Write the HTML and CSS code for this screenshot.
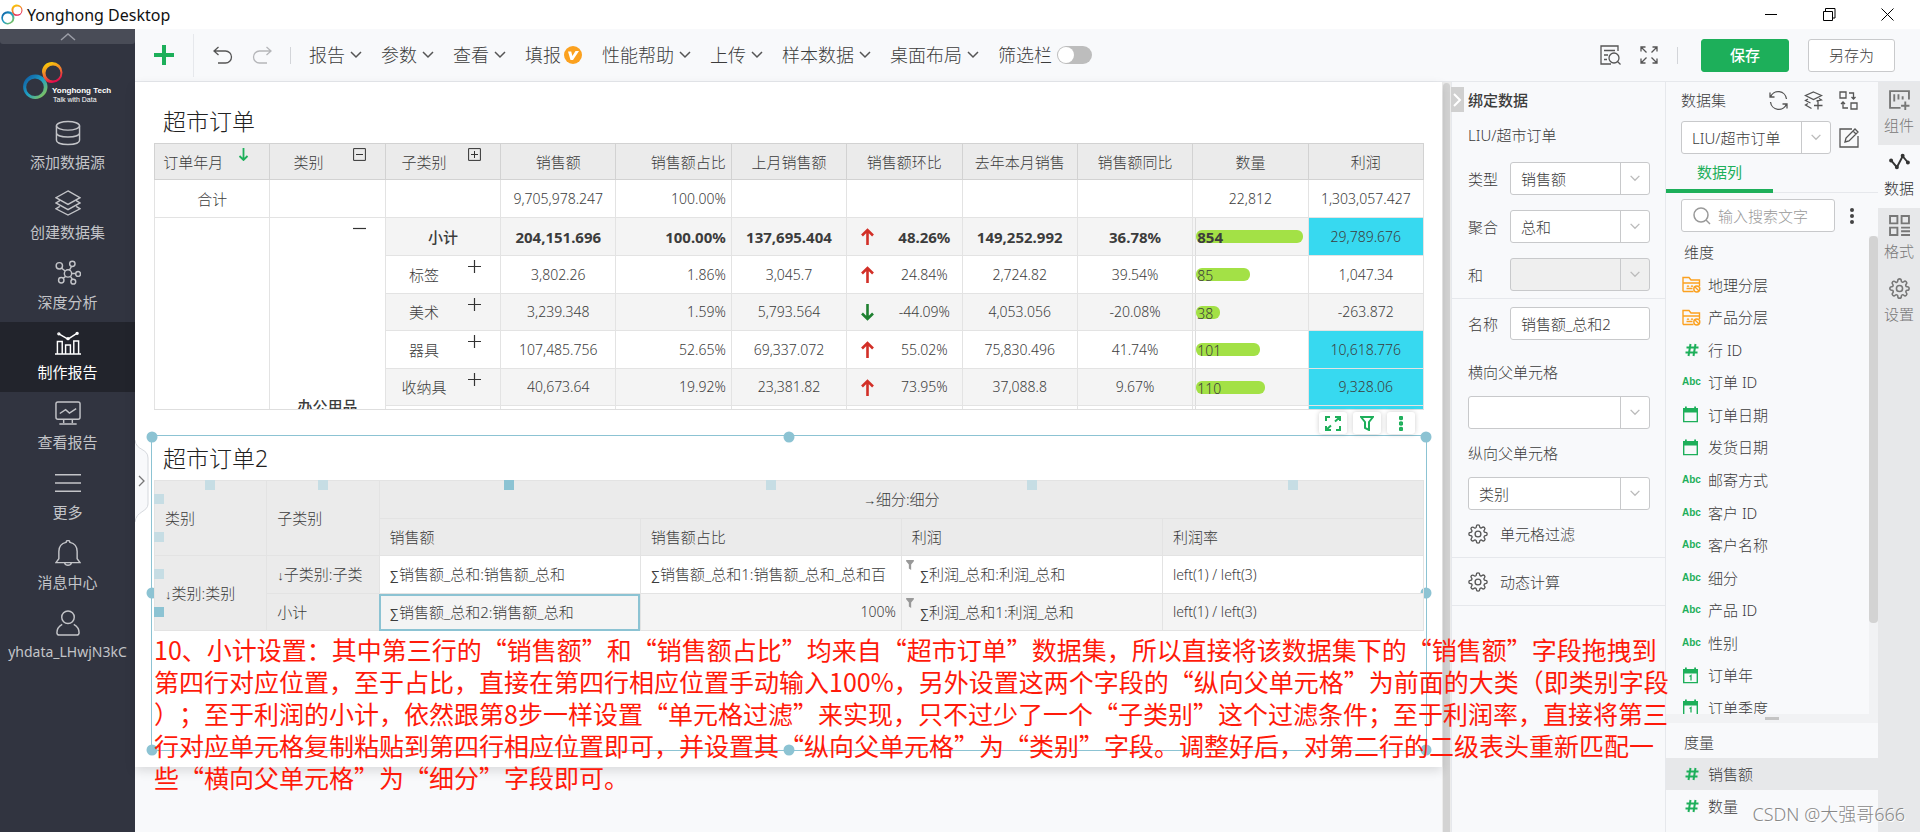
FILE: index.html
```html
<!DOCTYPE html>
<html lang="zh-CN">
<head>
<meta charset="utf-8">
<title>Yonghong Desktop</title>
<link rel="stylesheet" href="styles.css">
</head>
<body>
<svg class="defs" aria-hidden="true">
  <defs>
    <linearGradient id="g-cool" x1="0" y1="0" x2="1" y2="1"><stop offset="0" stop-color="#0b4f9f"/><stop offset=".5" stop-color="#1fa0c4"/><stop offset="1" stop-color="#a4cf3a"/></linearGradient>
    <linearGradient id="g-warm" x1="0.2" y1="0" x2=".6" y2="1"><stop offset="0" stop-color="#fbd500"/><stop offset=".45" stop-color="#f2882a"/><stop offset="1" stop-color="#e3004f"/></linearGradient>
    <symbol id="rings" viewBox="0 0 40 39">
      <path fill="url(#g-warm)" fill-rule="evenodd" d="M29 1a10.500 10.500 0 0 1 0 21c-4 0-7-2-8.500-5l-1.500-6C19 5 23.500 1 29 1zM30 4.500a7.500 7.500 0 1 0 0 15 7.500 7.500 0 0 0 0-15z"/>
      <path fill="url(#g-cool)" fill-rule="evenodd" d="M12.500 13.500c4 0 7 1.500 9 4.500 2 2.500 3 5 3 8a12.200 12.200 0 1 1-12-12.500zM12 17.500a8.800 8.800 0 1 0 0 17.600 8.800 8.800 0 0 0 0-17.600z"/>
    </symbol>
    <symbol id="chev" viewBox="0 0 12 8"><path d="M1 1l5 5 5-5"/></symbol>
    <symbol id="gear" viewBox="0 0 24 24"><circle cx="12" cy="12" r="3.500"/><path d="M19.400 15a1.650 1.650 0 0 0 .33 1.820l.06.06a2 2 0 0 1-2.830 2.830l-.06-.06a1.650 1.650 0 0 0-2.820 1.180V21a2 2 0 0 1-4 0v-.09A1.650 1.650 0 0 0 7.180 19.730l-.06.06a2 2 0 0 1-2.830-2.830l.06-.06A1.650 1.650 0 0 0 3.170 14H3a2 2 0 0 1 0-4h.09A1.650 1.650 0 0 0 4.270 7.180l-.06-.06a2 2 0 0 1 2.830-2.830l.06.06A1.650 1.650 0 0 0 10 3.090V3a2 2 0 0 1 4 0v.09a1.650 1.650 0 0 0 2.820 1.180l.06-.06a2 2 0 0 1 2.830 2.830l-.06.06A1.650 1.650 0 0 0 20.910 10H21a2 2 0 0 1 0 4h-.09a1.650 1.650 0 0 0-1.510 1z"/></symbol>
    <symbol id="up" viewBox="0 0 13 17"><path d="M6.500 17V2M1 7.500L6.500 2 12 7.500" fill="none" stroke="currentColor" stroke-width="2.600"/></symbol>
    <symbol id="plus" viewBox="0 0 13 13"><path d="M6.500 0v13M0 6.500h13" stroke="#333" stroke-width="1.200"/></symbol>
    <symbol id="hash" viewBox="0 0 14 14"><path d="M5.500 1L3.500 13M10.500 1l-2 12M1.500 4.500h12M.5 9.500h12" fill="none" stroke="#1daf5a" stroke-width="2"/></symbol>
    <symbol id="folder" viewBox="0 0 19 17"><path d="M1 15.500V1.500h6l2 2.500h8.500v6M1 15.500h10.500M1 7h16.500M5 9.800q1 .9 2 0M9 9.800q1 .9 2 0M4.500 12.500h6" fill="none" stroke="#fba11f" stroke-width="1.400"/><circle cx="14.800" cy="13" r="3" fill="none" stroke="#fba11f" stroke-width="1.400"/><path d="M13 11l4 4" stroke="#fba11f" stroke-width="1.300"/></symbol>
    <symbol id="cal" viewBox="0 0 17 17"><path d="M1.700 3v12.600h13.600V3" fill="none" stroke="#1daf5a" stroke-width="1.400"/><path d="M1 2h2V.5h1.800V2h7.400V.5H14V2h2v4.500H1z" fill="#1daf5a"/></symbol>
    <symbol id="funnel" viewBox="0 0 10 13"><path d="M0 0h10v1.500L6.500 6v7L3.500 11V6L0 1.500z" fill="#999"/></symbol>
  </defs>
</svg>

<div class="app">
  <header class="titlebar">
    <svg class="app-logo"><use href="#rings"/></svg>
    <span class="app-name">Yonghong Desktop</span>
    <button class="win-btn" aria-label="最小化"><svg width="12" height="13"><path d="M0 6.500h12" stroke="#000"/></svg></button>
    <button class="win-btn" aria-label="还原"><svg width="13" height="13"><path d="M.5 3.500h9v9h-9zM2.500 3V.5h9.500v9.500h-2" fill="none" stroke="#000"/></svg></button>
    <button class="win-btn" aria-label="关闭"><svg width="13" height="13"><path d="M.5.5l12 12M12.500.5l-12 12" stroke="#000"/></svg></button>
  </header>

  <div class="body">
    <nav class="sidebar">
      <button class="side-up" aria-label="收起"><svg width="16" height="9"><path d="M1 8l7-6 7 6" fill="none" stroke="#9b9da6" stroke-width="1.500"/></svg></button>
      <svg class="brand" viewBox="0 0 135 68">
        <use href="#rings" x="23" y="17" width="40" height="39"/>
        <text x="52" y="49" class="brand-name">Yonghong Tech</text>
        <text x="53" y="58" class="brand-sub">Talk with Data</text>
      </svg>
      <a class="side-item" href="#"><svg viewBox="0 0 27 27"><ellipse cx="13.500" cy="6" rx="12" ry="4.500"/><path d="M1.500 6v15c0 6 24 6 24 0V6M1.500 13.500c0 5.500 24 5.500 24 0"/></svg>添加数据源</a>
      <a class="side-item" href="#"><svg viewBox="0 0 27 27"><path d="M13.500 1L26 8l-12.500 7L1 8zM5 11l-4 2.500 12.500 7 12.500-7-4-2.500M5 17l-4 2.500 12.500 6.500L26 19.500 22 17"/></svg>创建数据集</a>
      <a class="side-item" href="#"><svg viewBox="0 0 27 27"><circle cx="13.500" cy="14" r="3.800"/><circle cx="4.500" cy="6" r="3.300"/><circle cx="18" cy="4" r="2.800"/><circle cx="24" cy="14.500" r="2.500"/><circle cx="19" cy="22.500" r="2.500"/><circle cx="6.500" cy="21" r="2.800"/><path d="M7 8.500l3.500 3M17 7l-2 3.500M17.500 14H21M16 17l2 3M11 17l-2.500 2"/></svg>深度分析</a>
      <a class="side-item active" href="#"><svg viewBox="0 0 27 27"><path d="M0 25h27M2.500 25V12h5v13M11 25v-9.500h5V25M19.500 25V11.500h5V25M4 4l9.500 5.500L23.500 3"/><circle cx="4" cy="4" r="1"/><circle cx="13.500" cy="9" r="1"/><circle cx="23" cy="3.500" r="1"/></svg>制作报告</a>
      <a class="side-item" href="#"><svg viewBox="0 0 27 27"><rect x="1" y="2" width="25" height="18" rx="2"/><path d="M5 14l6-4 4 3.500L22 9M9 20v4M18 20v4M4.500 25h18"/></svg>查看报告</a>
      <a class="side-item" href="#"><svg viewBox="0 0 27 27"><path d="M0 5h27M0 13.500h27M0 22h27"/></svg>更多</a>
      <a class="side-item" href="#"><svg viewBox="0 0 27 27"><path d="M1 23.500h25l-3-4V12c0-5-3-8.500-7.500-9.500a2 2 0 0 0-4 0C7 3.500 4 7 4 12v7.500zM10 24c1 3 6 3 7 0"/></svg>消息中心</a>
      <a class="side-item" href="#"><svg viewBox="0 0 27 27"><circle cx="13.500" cy="7.500" r="6.500"/><path d="M7.500 15C4 17 2 20 2 23.500c0 1.500 1 2.500 2.500 2.500h18c1.500 0 2.500-1 2.500-2.500 0-3.500-2-6.500-5.500-8.500"/></svg>yhdata_LHwjN3kC</a>
    </nav>

    <div class="work">
      <div class="toolbar">
        <button class="add" aria-label="新建"><svg width="20" height="20"><path d="M10 0v20M0 10h20" stroke="#1daf5a" stroke-width="4"/></svg></button>
        <i class="sep tall"></i>
        <button class="ico undo" aria-label="撤销"><svg width="20" height="18" viewBox="0 0 20 18"><path d="M5.500 1L1 5l4.500 4M1 5h11.500a6 6 0 0 1 0 12H5"/></svg></button>
        <button class="ico redo" aria-label="重做"><svg width="20" height="18" viewBox="0 0 20 18"><path d="M14.500 1L19 5l-4.500 4M19 5H7.500a6 6 0 0 0 0 12H15"/></svg></button>
        <i class="sep"></i>
        <div class="menus">
          <button>报告<svg class="chev"><use href="#chev"/></svg></button>
          <button>参数<svg class="chev"><use href="#chev"/></svg></button>
          <button>查看<svg class="chev"><use href="#chev"/></svg></button>
          <button class="vip">填报<svg width="18" height="18"><circle cx="9" cy="9" r="9" fill="#fba11f"/><path d="M4 5.500h3.200l1.200 4.500L11.500 5h3.500L9 14H6.500z" fill="#fff"/></svg></button>
          <button>性能帮助<svg class="chev"><use href="#chev"/></svg></button>
          <button>上传<svg class="chev"><use href="#chev"/></svg></button>
          <button>样本数据<svg class="chev"><use href="#chev"/></svg></button>
          <button>桌面布局<svg class="chev"><use href="#chev"/></svg></button>
          <label class="switch">筛选栏<input type="checkbox"></label>
        </div>
        <button class="ico preview" aria-label="预览"><svg width="21" height="20" viewBox="0 0 21 20"><path d="M18 6V1H1v18h10M4 5.500h11M4 10h4M4 14.500h3"/><circle cx="14" cy="13" r="5"/><path d="M17.500 16.500l3 3"/></svg></button>
        <button class="ico full" aria-label="全屏"><svg width="18" height="18" viewBox="0 0 18 18"><path d="M1 5.500V1h4.500M1 1l5.500 5.500M12.500 1H17v4.500M17 1l-5.500 5.500M1 12.500V17h4.500M1 17l5.500-5.500M12.500 17H17v-4.500M17 17l-5.500-5.500"/></svg></button>
        <i class="sep"></i>
        <button class="btn primary">保存</button>
        <button class="btn">另存为</button>
      </div>

      <div class="panes">
        <main class="stage">
          <div class="canvas">
            <section class="widget">
              <h2>超市订单</h2>
              <div class="clip">
                <table class="report">
                  <thead>
                    <tr>
                      <th class="mk">订单年月<svg class="corner" viewBox="0 0 13 13"><path d="M6.500 0v12M2.500 8l4 4 4-4" fill="none" stroke="#1daf5a" stroke-width="1.800"/></svg></th>
                      <th class="mk">类别<svg class="corner" viewBox="0 0 13 13"><path d="M.6.6h11.800v11.800H.6zM3 6.500h7" fill="none" stroke="#333"/></svg></th>
                      <th class="mk">子类别<svg class="corner" viewBox="0 0 13 13"><path d="M.6.6h11.800v11.800H.6zM3 6.500h7M6.500 3v7" fill="none" stroke="#333"/></svg></th>
                      <th>销售额</th><th class="r">销售额占比</th><th>上月销售额</th><th>销售额环比</th><th>去年本月销售</th><th>销售额同比</th><th>数量</th><th>利润</th>
                    </tr>
                  </thead>
                  <tbody>
                    <tr><td class="zh">合计</td><td></td><td></td><td>9,705,978.247</td><td class="r">100.00%</td><td></td><td></td><td></td><td></td><td>22,812</td><td>1,303,057.427</td></tr>
                    <tr class="alt sum"><td class="plain" rowspan="6"></td><td class="plain zh mk2" rowspan="6">办公用品<svg class="corner" viewBox="0 0 13 13"><path d="M0 6.500h13" stroke="#333" stroke-width="1.200"/></svg></td><td class="zh">小计</td><td>204,151.696</td><td class="r">100.00%</td><td>137,695.404</td><td><div class="trend"><svg><use href="#up"/></svg><span>48.26%</span></div></td><td>149,252.992</td><td>36.78%</td><td class="q"><div class="bar" style="width:96%">854</div></td><td class="hot">29,789.676</td></tr>
                    <tr><td class="zh mk">标签<svg class="corner"><use href="#plus"/></svg></td><td>3,802.26</td><td class="r">1.86%</td><td>3,045.7</td><td><div class="trend"><svg><use href="#up"/></svg><span>24.84%</span></div></td><td>2,724.82</td><td>39.54%</td><td class="q"><div class="bar" style="width:48%">85</div></td><td>1,047.34</td></tr>
                    <tr class="alt short"><td class="zh mk">美术<svg class="corner"><use href="#plus"/></svg></td><td>3,239.348</td><td class="r">1.59%</td><td>5,793.564</td><td><div class="trend down"><svg><use href="#up"/></svg><span>-44.09%</span></div></td><td>4,053.056</td><td>-20.08%</td><td class="q"><div class="bar" style="width:21%">38</div></td><td>-263.872</td></tr>
                    <tr><td class="zh mk">器具<svg class="corner"><use href="#plus"/></svg></td><td>107,485.756</td><td class="r">52.65%</td><td>69,337.072</td><td><div class="trend"><svg><use href="#up"/></svg><span>55.02%</span></div></td><td>75,830.496</td><td>41.74%</td><td class="q"><div class="bar" style="width:57%">101</div></td><td class="hot">10,618.776</td></tr>
                    <tr class="alt short"><td class="zh mk">收纳具<svg class="corner"><use href="#plus"/></svg></td><td>40,673.64</td><td class="r">19.92%</td><td>23,381.82</td><td><div class="trend"><svg><use href="#up"/></svg><span>73.95%</span></div></td><td>37,088.8</td><td>9.67%</td><td class="q"><div class="bar" style="width:62%">110</div></td><td class="hot">9,328.06</td></tr>
                    <tr class="rest"><td></td><td></td><td></td><td></td><td></td><td></td><td></td><td class="q"></td><td class="hot"></td></tr>
                  </tbody>
                </table>
              </div>
            </section>

            <section class="widget selected">
              <div class="floatbar">
                <button aria-label="放大"><svg width="16" height="15" viewBox="0 0 16 15"><path d="M1 5V1h4M10 1h5v4M15 1l-5 4.500M1 10v4h5M1 14l5-4.500M15 10v4h-4"/></svg></button>
                <button aria-label="筛选"><svg width="14" height="15" viewBox="0 0 14 15"><path d="M1 1h12L9 6v8l-4-2V6z"/></svg></button>
                <button aria-label="更多"><svg width="4" height="15" viewBox="0 0 4 15"><circle cx="2" cy="2" r="1.200"/><circle cx="2" cy="7.500" r="1.200"/><circle cx="2" cy="13" r="1.200"/></svg></button>
              </div>
              <i class="h tl"></i><i class="h tc"></i><i class="h tr"></i><i class="h ml"></i><i class="h mr"></i><i class="h bl"></i><i class="h bc"></i><i class="h br"></i>
              <h2>超市订单2</h2>
              <div class="design">
                <table class="edit">
                  <colgroup><col class="e1"><col class="e1"><col class="e2"><col class="e2"><col class="e2"><col class="e2"></colgroup>
                  <tr class="e-a"><th rowspan="2">类别</th><th rowspan="2">子类别</th><th colspan="4" class="mid"><span class="sym">→</span>细分:细分</th></tr>
                  <tr class="e-b"><th>销售额</th><th>销售额占比</th><th>利润</th><th>利润率</th></tr>
                  <tr class="e-a"><th rowspan="2"><span class="sym">↓</span>类别:类别</th><th><span class="sym">↓</span>子类别:子类</th><td><span class="sym">∑</span>销售额_总和:销售额_总和</td><td><span class="sym">∑</span>销售额_总和1:销售额_总和_总和百</td><td class="f"><svg><use href="#funnel"/></svg><span class="sym">∑</span>利润_总和:利润_总和</td><td class="lat">left(1) / left(3)</td></tr>
                  <tr class="e-b alt"><th>小计</th><td class="cur"><span class="sym">∑</span>销售额_总和2:销售额_总和</td><td class="lat r">100%</td><td class="f"><svg><use href="#funnel"/></svg><span class="sym">∑</span>利润_总和1:利润_总和</td><td class="lat">left(1) / left(3)</td></tr>
                </table>
                <div class="grips cols"><i></i><i></i><i class="on"></i><i></i><i></i><i></i></div>
                <div class="grips rows"><i></i><i></i><i></i><i class="on"></i></div>
              </div>
            </section>
          </div>
          <svg class="notch" width="14" height="84" viewBox="0 0 14 84"><path d="M0 1c1 11 13 8 13 18v46c0 8-12 7-13 18" fill="#f8f9fb" stroke="#d5d8dd"/><path d="M4 37l5 5-5 5" fill="none" stroke="#777" stroke-width="1.300"/></svg>
          <p class="note">10、小计设置：其中第三行的“销售额”和“销售额占比”均来自“超市订单”数据集，所以直接将该数据集下的“销售额”字段拖拽到<br>第四行对应位置，至于占比，直接在第四行相应位置手动输入100%，另外设置这两个字段的“纵向父单元格”为前面的大类（即类别字段<br>）；至于利润的小计，依然跟第8步一样设置“单元格过滤”来实现，只不过少了一个“子类别”这个过滤条件；至于利润率，直接将第三<br>行对应单元格复制粘贴到第四行相应位置即可，并设置其“纵向父单元格”为“类别”字段。调整好后，对第二行的二级表头重新匹配一<br>些“横向父单元格”为“细分”字段即可。</p>
        </main>
        <div class="vscroll"><i></i></div>

        <aside class="bind">
          <button class="fold" aria-label="折叠"><svg width="9" height="14"><path d="M1 1l6 6-6 6" fill="none" stroke="#fff" stroke-width="2"/></svg></button>
          <div class="b-group first">
            <h3>绑定数据</h3>
            <p class="path">LIU/超市订单</p>
            <div class="field"><label for="s-type">类型</label><div class="sel"><select id="s-type"><option>销售额</option></select><svg><use href="#chev"/></svg></div></div>
            <div class="field"><label for="s-agg">聚合</label><div class="sel"><select id="s-agg"><option>总和</option></select><svg><use href="#chev"/></svg></div></div>
            <div class="field"><label for="s-and">和</label><div class="sel off"><select id="s-and" disabled><option></option></select><svg><use href="#chev"/></svg></div></div>
          </div>
          <div class="b-group second">
            <div class="field"><label for="i-name">名称</label><input id="i-name" type="text" value="销售额_总和2"></div>
            <label class="blk" for="s-h">横向父单元格</label>
            <div class="sel"><select id="s-h"><option></option></select><svg><use href="#chev"/></svg></div>
            <label class="blk low" for="s-v">纵向父单元格</label>
            <div class="sel"><select id="s-v"><option>类别</option></select><svg><use href="#chev"/></svg></div>
            <button class="cfg"><svg><use href="#gear"/></svg>单元格过滤</button>
          </div>
          <div class="b-group third"><button class="cfg"><svg><use href="#gear"/></svg>动态计算</button></div>
        </aside>

        <aside class="dataset">
          <div class="d-head"><span>数据集</span>
            <button aria-label="刷新"><svg width="19" height="19" viewBox="0 0 19 19"><path d="M1 1.500V6h4.500M1.500 6a8.300 8.300 0 0 1 16 2M18 17.500V13h-4.500M17.500 13A8.300 8.300 0 0 1 1.500 11"/></svg></button>
            <button aria-label="新建数据集"><svg width="19" height="19" viewBox="0 0 19 19"><path d="M9.500 1l8 3.500-8 4-8-4zM4 8L1.500 9.500l5 2.500M4 12.500L1.500 14l6 3.500M15 7.500l2.500 1.500-5 1M14 10.500v8M10 14.500h8.500"/></svg></button>
            <button aria-label="切换"><svg width="19" height="19" viewBox="0 0 19 19"><path d="M1 1h6v6H1zM12 12h6v6h-6zM10 2h4.500v6M12.500 6l2 2 2-2M9 17H4v-6M2 13l2-2 2 2"/></svg></button>
          </div>
          <div class="d-src">
            <div class="sel"><select aria-label="数据集"><option>LIU/超市订单</option></select><svg><use href="#chev"/></svg></div>
            <button aria-label="编辑"><svg width="20" height="20" viewBox="0 0 20 20"><path d="M13 1H1v18h18V8M6 14l1-4 9-9 3 3-9 9zM14 3l3 3"/></svg></button>
          </div>
          <div class="d-tabs"><button>数据列</button></div>
          <div class="d-search">
            <label><svg width="18" height="18" viewBox="0 0 18 18"><circle cx="8" cy="8" r="7"/><path d="M13 13l4 4"/></svg><input type="search" placeholder="输入搜索文字" aria-label="搜索"></label>
            <button aria-label="更多"><svg width="4" height="17"><circle cx="2" cy="3" r="2"/><circle cx="2" cy="9" r="2"/><circle cx="2" cy="15" r="2"/></svg></button>
          </div>
          <div class="d-list">
            <ul class="fields dims">
              <li class="cap">维度</li>
              <li><svg class="fo"><use href="#folder"/></svg>地理分层</li>
              <li><svg class="fo"><use href="#folder"/></svg>产品分层</li>
              <li><svg class="ha"><use href="#hash"/></svg>行 ID</li>
              <li><b>Abc</b>订单 ID</li>
              <li><svg class="ca"><use href="#cal"/></svg>订单日期</li>
              <li><svg class="ca"><use href="#cal"/></svg>发货日期</li>
              <li><b>Abc</b>邮寄方式</li>
              <li><b>Abc</b>客户 ID</li>
              <li><b>Abc</b>客户名称</li>
              <li><b>Abc</b>细分</li>
              <li><b>Abc</b>产品 ID</li>
              <li><b>Abc</b>性别</li>
              <li><svg class="ca" viewBox="0 0 17 17"><use href="#cal"/><path d="M7.500 9.500l1.500-1v5" fill="none" stroke="#1daf5a" stroke-width="1.300"/></svg>订单年</li>
              <li><svg class="ca" viewBox="0 0 17 17"><use href="#cal"/><path d="M7.500 9.500l1.500-1v5" fill="none" stroke="#1daf5a" stroke-width="1.300"/></svg>订单季度</li>
            </ul>
            <div class="d-scroll"><i></i></div>
          </div>
          <div class="split"><i></i></div>
          <ul class="fields meas">
            <li class="cap">度量</li>
            <li class="on"><svg class="ha"><use href="#hash"/></svg>销售额</li>
            <li><svg class="ha"><use href="#hash"/></svg>数量</li>
          </ul>
        </aside>

        <nav class="tabs">
          <button><svg viewBox="0 0 20 20"><path d="M19 10V2H1v16h10M5 5v7M9 5v5M13 7v3M15.500 12v8M11.500 16h8"/></svg>组件</button>
          <button class="on"><svg viewBox="0 0 20 20"><path d="M2 8l5.500 6.500L13 4l5 6"/><circle cx="2" cy="8" r="1"/><circle cx="7.500" cy="14.500" r="1"/><circle cx="13" cy="3.500" r="1"/><circle cx="18" cy="10" r="1"/></svg>数据</button>
          <button><svg viewBox="0 0 20 20"><path d="M1 1h7v7H1zM12 1h7v7h-7zM1 12h7v7H1zM11.500 12H20M11.500 15.500H20M11.500 19H20"/></svg>格式</button>
          <button><svg viewBox="0 0 24 24"><use href="#gear"/></svg>设置</button>
        </nav>
      </div>
    </div>
  </div>
  <span class="mark">CSDN @大强哥666</span>
</div>
</body>
</html>
```
FILE: styles.css
```css
* { box-sizing: border-box; }
body {
  margin: 0;
  font: 300 15px/20px "Noto Sans", "Noto Sans CJK SC", sans-serif;
  color: #3c3c3c;
}
button {
  border: 0;
  padding: 0;
  background: none;
  color: inherit;
  font: inherit;
}
svg { display: block; }
ul, p, h2, h3 { margin: 0; padding: 0; }
.defs { position: absolute; width: 0; height: 0; }

.app {
  position: relative;
  display: flex;
  flex-direction: column;
  height: 100vh;
  overflow: hidden;
}

/* title bar */
.titlebar {
  display: flex;
  align-items: center;
  height: 29px;
  padding-right: 4px;
  background: #fff;
  color: #111;
}
.app-logo { width: 22px; height: 21px; margin: 0 4px 0 1px; }
.app-name { flex: 1; font-size: 16px; font-weight: 400; }
.win-btn { display: grid; place-items: center; width: 58px; height: 29px; }

.body { flex: 1; display: flex; min-height: 0; }

/* left navigation */
.sidebar {
  width: 135px;
  flex: none;
  background: #313440;
  color: #c3c4c8;
  font-weight: 400;
}
.side-up {
  display: grid;
  place-items: center;
  width: 100%;
  height: 15px;
  background: #494c57;
  border-radius: 0 0 3px 3px;
}
.brand { width: 135px; height: 68px; font-family: "Liberation Sans", sans-serif; fill: #fff; }
.brand-name { font-size: 8px; font-weight: 700; }
.brand-sub { font-size: 7px; }
.side-item {
  display: flex;
  flex-direction: column;
  align-items: center;
  gap: 6px;
  height: 70px;
  padding-top: 8px;
  color: inherit;
  text-decoration: none;
}
.side-item:last-child { font-size: 14px; }
.side-item svg { width: 26px; height: 26px; fill: none; stroke: currentColor; stroke-width: 1.5; }
.side-item.active { background: #22242c; color: #fff; }

.work { flex: 1; display: flex; flex-direction: column; min-width: 0; }

/* toolbar */
.toolbar {
  display: flex;
  align-items: center;
  height: 53px;
  flex: none;
  padding: 0 25px 0 19px;
  background: #f8f9fb;
  border-bottom: 1px solid #e6e8ec;
}
.sep { width: 1px; height: 17px; background: #d3d5d9; }
.sep.tall { height: 43px; margin-left: 19px; background: #e6e8ec; }
.ico svg, .d-head svg, .d-src button svg { fill: none; stroke: #555; stroke-width: 1.3; }
.undo { margin-left: 19px; }
.redo { margin: 0 18px 0 19px; }
.redo svg { stroke: #b5b6b9; }
.menus { flex: 1; display: flex; align-items: center; gap: 20px; margin-left: 18px; font-size: 18px; line-height: 26px; }
.menus button, .switch { display: flex; align-items: center; gap: 5px; white-space: nowrap; }
.menus .vip { gap: 3px; }
.chev { width: 12px; height: 8px; margin-right: -1px; fill: none; stroke: #555; stroke-width: 1.5; }
.switch input {
  appearance: none;
  width: 35px;
  height: 18px;
  margin: 0;
  padding: 1px;
  border-radius: 9px;
  background: #bdbdbd;
}
.switch input::before { content: ""; display: block; width: 16px; height: 16px; border-radius: 50%; background: #fff; }
.full { margin: 0 19px; }
.btn {
  width: 87px;
  height: 33px;
  margin-left: 19px;
  border: 1px solid #c9cacc;
  border-radius: 3px;
  background: #fff;
}
.btn.primary { width: 88px; margin-left: 23px; border-color: #1daf5a; background: #1daf5a; color: #fff; font-weight: 500; }

.panes { flex: 1; display: flex; min-height: 0; background: #f8f9fb; }

/* report canvas */
.stage { position: relative; flex: 1; min-width: 0; }
.canvas {
  height: 685px;
  padding: 23px 15px 0 16px;
  background: #fff;
  box-shadow: 0 4px 10px rgba(0, 0, 0, .12);
}
.widget { padding: 0 3px; }
.widget h2 { padding-left: 9px; font-size: 23px; line-height: 32px; font-weight: 300; color: #222; }
.clip { height: 267px; margin-top: 6px; overflow: hidden; border-bottom: 1px solid #dedede; }

table { width: 100%; table-layout: fixed; border-collapse: collapse; }
th { font-weight: 300; }
.report th, .report td { position: relative; padding: 0; border: 1px solid #e3e3e3; text-align: center; white-space: nowrap; }
.report th { height: 36px; background: #ebebeb; border-color: #d2d2d2; }
.report td { height: 38px; font-size: 14px; }
.report .short td { height: 37px; }
.report .rest td { height: 188px; }
.report .r { padding-right: 5px; text-align: right; }
.report td.zh { font-size: 15px; }
.report .mk { padding-right: 38px; }
.alt { background: #f4f4f4; }
.report .plain { background: #fff; }
.report .sum td { font-size: 15px; font-weight: 700; }
.report .sum td.zh { font-weight: 500; }
.report .sum td.hot { font-size: 14px; font-weight: 300; }
.report .hot { background: #37d9f0; }
.corner { position: absolute; top: 4px; right: 19px; width: 13px; height: 13px; }
.trend { display: flex; align-items: center; padding-left: 14px; }
.trend svg { width: 13px; height: 17px; color: #d22f27; }
.trend.down svg { color: #1e8030; transform: rotate(180deg); }
.trend span { flex: 1; padding-left: 13px; }
.q { background-image: linear-gradient(#dcdcdc, #dcdcdc); background-size: 1px 100%; background-position: 2px 0; background-repeat: no-repeat; }
.report td.q { padding-left: 3px; }
.bar { height: 13px; padding-left: 1px; border-radius: 6px; background: #a3e146; text-align: left; line-height: 15px; }

/* selected widget */
.selected { position: relative; height: 316px; margin-top: 25px; padding: 6px 2px 0; border: 1px solid #8cc3d3; }
.selected h2 { margin-bottom: 6px; }
.h { position: absolute; width: 11px; height: 11px; border-radius: 50%; background: #8cc3d3; transform: translate(-50%, -50%); }
.tl, .ml, .bl { left: 0; }
.tc, .bc { left: 50%; }
.tr, .mr, .br { left: 100%; }
.tl, .tc, .tr { top: 1px; }
.ml, .mr { top: 50%; }
.bl, .bc, .br { top: 100%; }
.floatbar { position: absolute; top: -24px; right: 11px; display: flex; gap: 6px; }
.floatbar button { display: grid; place-items: center; width: 28px; height: 22px; border-radius: 3px; background: #fff; box-shadow: 0 0 5px rgba(0, 0, 0, .2); }
.floatbar svg { fill: none; stroke: #1daf5a; stroke-width: 2; }
.design { position: relative; }
.edit th, .edit td { padding: 0 0 0 10px; border: 1px solid #e3e3e3; text-align: left; white-space: nowrap; overflow: hidden; }
.edit th { background: #ebebeb; }
.edit .mid { padding: 0; text-align: center; }
.edit .lat { font-size: 14px; }
.edit .r { padding-right: 5px; text-align: right; }
.edit .f { position: relative; padding-left: 18px; }
.edit .f svg { position: absolute; top: 4px; left: 4px; width: 8px; height: 10px; }
.edit .cur { outline: 2px solid #8cc3d3; outline-offset: -2px; }
.sym { font: 400 13px/18px "Liberation Sans", sans-serif; }
.e1 { width: 8.85%; }
.e2 { width: 20.575%; }
.e-a { height: 38px; }
.e-b { height: 37px; }
.grips { position: absolute; inset: 0; display: grid; pointer-events: none; }
.grips i { width: 10px; height: 10px; background: #c6dde4; }
.grips .on { background: #8cc3d3; }
.cols { grid-template-columns: 8.85% 8.85% repeat(4, 20.575%); justify-items: center; }
.rows { grid-template-rows: repeat(4, 1fr); align-items: center; }
.notch { position: absolute; left: 0; top: 357px; }
.note {
  position: absolute;
  z-index: 5;
  left: 19px;
  top: 551px;
  font: 400 25px/32px "Noto Sans CJK SC", sans-serif;
  text-spacing-trim: space-all;
  color: #ff1a0a;
  white-space: nowrap;
  pointer-events: none;
}
.vscroll { width: 9px; padding: 1px 1px 0; background: #ececec; }
.vscroll i { display: block; height: 100%; border-radius: 4px 4px 0 0; background: #d3d3d3; }

/* binding panel */
.bind { position: relative; width: 215px; flex: none; border: solid #e6e8ec; border-width: 0 1px; }
.fold { position: absolute; left: -1px; top: 5px; display: grid; place-items: center; width: 13px; height: 25px; background: #d0d0d0; }
.b-group { display: flex; flex-direction: column; padding: 8px 15px 0 16px; border-bottom: 1px solid #e6e8ec; }
.bind h3 { font-size: 15px; line-height: 20px; font-weight: 500; }
.path { margin: 15px 0 2px; }
.field { display: flex; align-items: center; justify-content: space-between; margin-top: 15px; }
.first { padding-bottom: 7px; }
.field .sel, .field input { width: 140px; }
.sel { display: grid; grid-template-columns: 1fr 29px; height: 33px; border: 1px solid #c8c9cb; border-radius: 3px; background: #fff; }
.sel select {
  grid-area: 1 / 1 / 2 / 3;
  min-width: 0;
  appearance: none;
  border: 0;
  padding: 0 30px 0 10px;
  background: none;
  color: #3c3c3c;
  font: inherit;
}
.sel svg {
  grid-area: 1 / 2;
  width: 29px;
  height: 31px;
  padding: 12px 8px;
  border-left: 1px solid #c8c9cb;
  fill: none;
  stroke: #bbb;
  stroke-width: 1.5;
  pointer-events: none;
}
.sel.off { background: #efefef; }
.field input { height: 33px; padding: 0 10px; border: 1px solid #c8c9cb; border-radius: 3px; background: #fff; color: #3c3c3c; font: inherit; }
.second .field { margin-top: 0; }
.blk { margin: 22px 0 14px; }
.blk.low { margin: 14px 0; }
.cfg { display: flex; align-items: center; gap: 12px; height: 47px; }
.cfg svg { width: 20px; height: 20px; fill: none; stroke: #555; stroke-width: 1.6; }
.third { padding-top: 0; }

/* dataset panel */
.dataset { width: 212px; flex: none; display: flex; flex-direction: column; min-height: 0; }
.d-head { display: flex; align-items: center; gap: 16px; padding: 8px 20px 0 15px; }
.d-head span { flex: 1; }
.d-src { display: flex; align-items: center; gap: 8px; padding: 11px 19px 0 15px; }
.d-src .sel { flex: 1; }
.d-tabs { height: 39px; border-bottom: 1px solid #e6e8ec; }
.d-tabs button { width: 107px; height: 39px; border-bottom: 4px solid #1daf5a; color: #1daf5a; font-weight: 400; }
.d-search { display: flex; align-items: center; justify-content: space-between; padding: 6px 24px 0 15px; }
.d-search label { display: flex; align-items: center; gap: 7px; width: 154px; height: 33px; padding: 0 11px; border: 1px solid #c8c9cb; border-radius: 3px; background: #fff; }
.d-search label svg { flex: none; fill: none; stroke: #999; stroke-width: 1.5; }
.d-search input { width: 100%; min-width: 0; padding: 0; border: 0; background: none; font: inherit; }
.d-search input::placeholder { color: #999; }
.d-search button svg { fill: #444; }
.d-list { flex: 1; display: flex; min-height: 0; overflow: hidden; padding-top: 4px; }
.fields { list-style: none; }
.fields li { display: flex; align-items: center; padding-left: 42px; }
.fields li svg, .fields li b { flex: none; margin-left: -26px; }
.fields .cap { padding-left: 18px; }
.dims { flex: 1; display: grid; grid-template-rows: repeat(15, 1fr); height: 488px; }
.fo { width: 19px; height: 17px; margin-right: 7px; }
.fields li .ha { width: 14px; height: 14px; margin: 0 9px 0 -23px; }
.ca { width: 17px; height: 17px; margin-right: 9px; }
.fields b { width: 20px; margin-right: 6px; font: 700 10px/20px "Liberation Sans", sans-serif; color: #1daf5a; }
.d-scroll { width: 9px; height: 100%; background: #f1f2f4; }
.d-scroll i { display: block; height: 81%; border-radius: 4px; background: #d3d3d3; }
.split { display: grid; place-items: center; height: 9px; flex: none; background: #f1f2f4; }
.split i { width: 14px; height: 3px; background: #c4c4c4; }
.meas { height: 109px; flex: none; padding-top: 3px; }
.meas li { height: 32px; }
.meas .on { background: #e7e8ea; }

/* right tabs */
.tabs { width: 42px; flex: none; background: #e7e8ea; color: #777; }
.tabs button { display: flex; flex-direction: column; align-items: center; gap: 5px; width: 100%; height: 63px; padding-top: 7px; }
.tabs svg { width: 21px; height: 21px; fill: none; stroke: currentColor; stroke-width: 1.8; }
.tabs .on { background: #f8f9fb; color: #333; }

.mark {
  position: absolute;
  right: 15px;
  bottom: 4px;
  font-size: 18px;
  line-height: 28px;
  color: #888;
  text-shadow: 1px 1px 0 #fff;
}
```
